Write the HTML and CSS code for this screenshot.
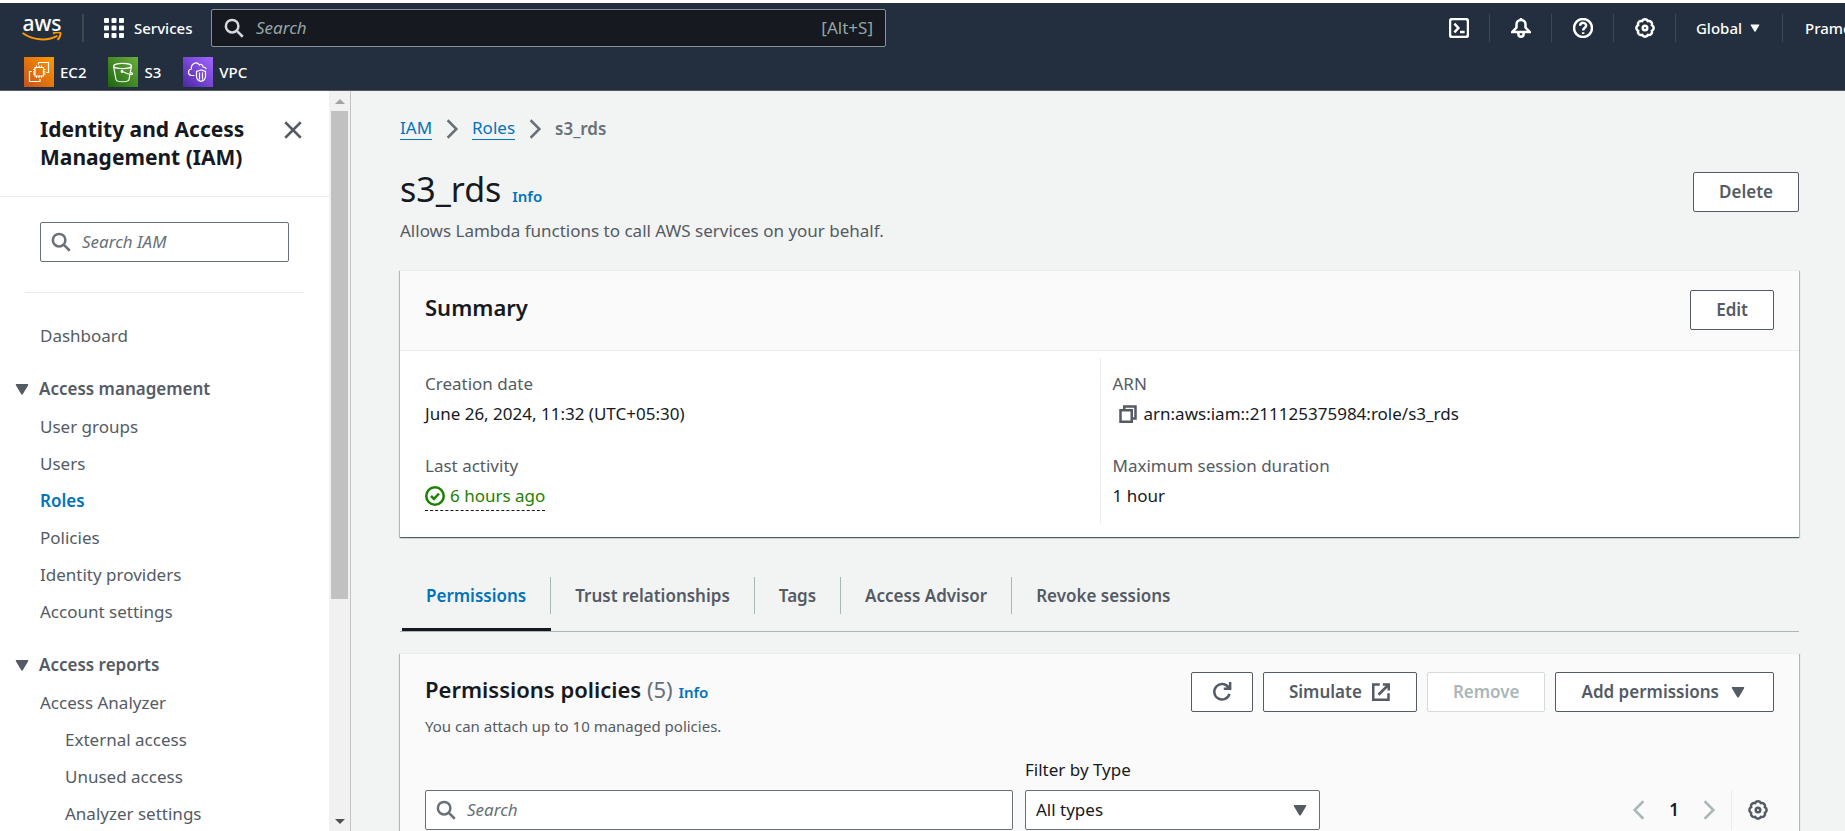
FILE: index.html
```html
<!DOCTYPE html>
<html lang="en">
<head>
<meta charset="utf-8">
<title>s3_rds | IAM | Global</title>
<link rel="stylesheet" href="styles.css">
</head>
<body>
<svg class="defs" aria-hidden="true">
  <defs>
    <linearGradient id="g-ec2" x1="0" y1="1" x2="1" y2="0"><stop offset="0" stop-color="#c8511b"/><stop offset="1" stop-color="#ff9900"/></linearGradient>
    <linearGradient id="g-s3" x1="0" y1="1" x2="1" y2="0"><stop offset="0" stop-color="#1b660f"/><stop offset="1" stop-color="#6cae3e"/></linearGradient>
    <linearGradient id="g-vpc" x1="0" y1="1" x2="1" y2="0"><stop offset="0" stop-color="#4d27a8"/><stop offset="1" stop-color="#a166ff"/></linearGradient>
    <symbol id="i-search" viewBox="0 0 16 16"><circle cx="6.500" cy="6.500" r="5" /><path d="m10.300 10.300 4.700 4.700"/></symbol>
    <symbol id="i-gear" viewBox="0 0 16 16"><path d="M13.54 10.3A2.6 2.6 0 0 1 10.3 13.54A2.6 2.6 0 0 1 5.7 13.54A2.6 2.6 0 0 1 2.46 10.3A2.6 2.6 0 0 1 2.46 5.7A2.6 2.6 0 0 1 5.7 2.46A2.6 2.6 0 0 1 10.3 2.46A2.6 2.6 0 0 1 13.54 5.7A2.6 2.6 0 0 1 13.54 10.3Z"/><circle cx="8" cy="8" r="1.8"/></symbol>
    <symbol id="i-caret" viewBox="0 0 16 16"><path class="solid" d="M3.6 4h8.8c.6 0 .8.5.5.9l-4.3 7.2c-.3.4-.9.4-1.200 0L3.100 4.900c-.3-.4 0-.9.5-.9z"/></symbol>
    <symbol id="i-right" viewBox="0 0 16 16"><path d="m4.500 1 7 7-7 7"/></symbol>
    <symbol id="i-left" viewBox="0 0 16 16"><path d="m11.500 1-7 7 7 7"/></symbol>
  </defs>
</svg>

<header class="topnav">
  <div class="topnav-row">
    <a class="aws" href="#" aria-label="AWS home">
      <span class="aws-word">aws</span>
      <svg class="aws-smile" viewBox="0 0 40 10" aria-hidden="true"><path class="smile-line" d="M.6 1C11 8.500 25.500 9.300 35.300 3.800"/><path class="smile-head" d="M31 1.500c3-1.500 6.800-1.300 7.300-.6.5.8-.3 4.700-2.800 6.900"/></svg>
    </a>
    <span class="bar"></span>
    <button class="services" type="button">
      <svg class="icon" viewBox="0 0 20 20" aria-hidden="true"><path class="solid" d="M0 1a1 1 0 0 1 1-1h3a1 1 0 0 1 1 1v3a1 1 0 0 1-1 1H1a1 1 0 0 1-1-1zM7.500 1a1 1 0 0 1 1-1h3a1 1 0 0 1 1 1v3a1 1 0 0 1-1 1h-3a1 1 0 0 1-1-1zM15 1a1 1 0 0 1 1-1h3a1 1 0 0 1 1 1v3a1 1 0 0 1-1 1h-3a1 1 0 0 1-1-1zM0 8.500a1 1 0 0 1 1-1h3a1 1 0 0 1 1 1v3a1 1 0 0 1-1 1H1a1 1 0 0 1-1-1zM7.500 8.500a1 1 0 0 1 1-1h3a1 1 0 0 1 1 1v3a1 1 0 0 1-1 1h-3a1 1 0 0 1-1-1zM15 8.500a1 1 0 0 1 1-1h3a1 1 0 0 1 1 1v3a1 1 0 0 1-1 1h-3a1 1 0 0 1-1-1zM0 16a1 1 0 0 1 1-1h3a1 1 0 0 1 1 1v3a1 1 0 0 1-1 1H1a1 1 0 0 1-1-1zM7.500 16a1 1 0 0 1 1-1h3a1 1 0 0 1 1 1v3a1 1 0 0 1-1 1h-3a1 1 0 0 1-1-1zM15 16a1 1 0 0 1 1-1h3a1 1 0 0 1 1 1v3a1 1 0 0 1-1 1h-3a1 1 0 0 1-1-1z"/></svg>
      Services
    </button>
    <label class="nav-search">
      <svg class="icon" aria-hidden="true"><use href="#i-search"/></svg>
      <input type="search" placeholder="Search" aria-label="Search AWS">
      <span>[Alt+S]</span>
    </label>
    <div class="utils">
      <button type="button" aria-label="CloudShell"><svg class="icon" viewBox="0 0 16 16"><rect x=".8" y=".8" width="14.400" height="14.400" rx="2"/><path d="m4.300 4.500 3.200 3.500-3.200 3.500M8.800 11.200H12.500"/></svg></button>
      <button type="button" aria-label="Notifications"><svg class="icon" viewBox="0 0 16 16"><path d="M1 11.200h14L11.600 7.600V5.200C11.600 3 10 1.600 8 1.600S4.400 3 4.400 5.200v2.400z"/><path d="M5.900 11.500v1.300a2.100 2.100 0 0 0 4.200 0v-1.300M8 0v2"/></svg></button>
      <button type="button" aria-label="Help"><svg class="icon" viewBox="0 0 16 16"><circle cx="8" cy="8" r="7.200"/><path d="M5.700 6.200C5.700 3 10.600 3.300 10.500 6.100 10.400 7.900 8.100 7.700 8.100 10M8.100 11.300v1.500"/></svg></button>
      <button type="button" aria-label="Settings"><svg class="icon"><use href="#i-gear"/></svg></button>
      <button class="region" type="button">Global <svg class="caret" aria-hidden="true"><use href="#i-caret"/></svg></button>
      <button class="account" type="button">Pramod</button>
    </div>
  </div>
  <nav class="favorites" aria-label="Favorites">
    <a href="#"><svg viewBox="0 0 30 30" aria-hidden="true"><rect width="30" height="30" fill="url(#g-ec2)" stroke="none"/><path d="M11 10.500h8.500v8.500h-8.500zM12.500 10V8.500M15 10V8.500M17.500 10V8.500M12.500 21V19.500M15 21V19.500M17.500 21V19.500M10.500 12.500H9M10.500 14.800H9M10.500 17H9M21.500 12.500h-1.500M21.500 14.800h-1.500M21.500 17h-1.500M14.500 7.500V5.500H24.500V15.500H22.500M8 14.500H5.500V24.500H16V22"/></svg>EC2</a>
    <a href="#"><svg viewBox="0 0 30 30" aria-hidden="true"><rect width="30" height="30" fill="url(#g-s3)" stroke="none"/><ellipse cx="14.500" cy="9" rx="9" ry="2.700"/><path d="M5.500 9 8 22.500c.5 3 12.500 3 13 0L23.500 9M14.500 14.500c4 2 8.500 3.500 10 2.700.5-.8-1-1.700-2.500-2.200"/><circle cx="14" cy="14.500" r=".8"/></svg>S3</a>
    <a href="#"><svg viewBox="0 0 30 30" aria-hidden="true"><rect width="30" height="30" fill="url(#g-vpc)" stroke="none"/><path d="M11.500 18.500H8.500C4.500 18 4.500 12.500 8.500 12 7.500 7 13.500 3.500 16.500 8c.8-1.500 3.500-.5 3.500 2 2 .2 3 1 3.200 2.200M18 13l-4.500 1.500v4.500c0 3 2 4.800 4.500 5.300 2.500-.5 4.500-2.300 4.500-5.300v-4.500zM16.500 15.500v7M19.500 15.500v7"/></svg>VPC</a>
  </nav>
</header>

<div class="shell">
  <aside class="side">
    <div class="side-body">
      <div class="side-head">
        <h2>Identity and Access Management (IAM)</h2>
        <button type="button" aria-label="Close navigation"><svg class="icon" viewBox="0 0 16 16"><path d="m1.800 1.800 12.400 12.400M14.200 1.800 1.800 14.200"/></svg></button>
      </div>
      <label class="field side-search">
        <svg class="icon" aria-hidden="true"><use href="#i-search"/></svg>
        <input type="search" placeholder="Search IAM" aria-label="Search IAM">
      </label>
      <hr>
      <nav aria-label="IAM">
        <ul class="links"><li><a href="#">Dashboard</a></li></ul>
        <button class="group" type="button"><svg class="icon" aria-hidden="true"><use href="#i-caret"/></svg>Access management</button>
        <ul class="links">
          <li><a href="#">User groups</a></li>
          <li><a href="#">Users</a></li>
          <li><a class="current" href="#" aria-current="page">Roles</a></li>
          <li><a href="#">Policies</a></li>
          <li><a href="#">Identity providers</a></li>
          <li><a href="#">Account settings</a></li>
        </ul>
        <button class="group" type="button"><svg class="icon" aria-hidden="true"><use href="#i-caret"/></svg>Access reports</button>
        <ul class="links">
          <li><a href="#">Access Analyzer</a>
            <ul class="links nested">
              <li><a href="#">External access</a></li>
              <li><a href="#">Unused access</a></li>
              <li><a href="#">Analyzer settings</a></li>
            </ul>
          </li>
        </ul>
      </nav>
    </div>
    <div class="scroll" aria-hidden="true">
      <span class="arrow up"></span>
      <span class="thumb"></span>
      <span class="arrow down"></span>
    </div>
  </aside>

  <main>
    <nav class="crumbs" aria-label="Breadcrumbs">
      <a href="#">IAM</a>
      <svg class="icon" aria-hidden="true"><use href="#i-right"/></svg>
      <a href="#">Roles</a>
      <svg class="icon" aria-hidden="true"><use href="#i-right"/></svg>
      <b>s3_rds</b>
    </nav>
    <div class="page-head">
      <div>
        <h1>s3_rds <a class="info" href="#">Info</a></h1>
        <p>Allows Lambda functions to call AWS services on your behalf.</p>
      </div>
      <button class="btn" type="button">Delete</button>
    </div>

    <section class="card">
      <div class="card-head">
        <h2>Summary</h2>
        <button class="btn" type="button">Edit</button>
      </div>
      <div class="summary">
        <dl>
          <dt>Creation date</dt>
          <dd>June 26, 2024, 11:32 (UTC+05:30)</dd>
          <dt>Last activity</dt>
          <dd><span class="activity"><svg class="icon" viewBox="0 0 16 16" aria-hidden="true"><circle cx="8" cy="8" r="7"/><path d="m4.800 8 2.400 2.300L11.200 6"/></svg>6 hours ago</span></dd>
        </dl>
        <dl>
          <dt>ARN</dt>
          <dd><button class="copy" type="button" aria-label="Copy ARN"><svg class="icon" viewBox="0 0 16 16"><path d="M2 5h9v9.200H2zM5 4.500V2h9v9.500h-2.500"/></svg></button>arn:aws:iam::211125375984:role/s3_rds</dd>
          <dt>Maximum session duration</dt>
          <dd>1 hour</dd>
        </dl>
      </div>
    </section>

    <div class="tabs" role="tablist">
      <button type="button" role="tab" aria-selected="true"><span>Permissions</span></button>
      <button type="button" role="tab"><span>Trust relationships</span></button>
      <button type="button" role="tab"><span>Tags</span></button>
      <button type="button" role="tab"><span>Access Advisor</span></button>
      <button type="button" role="tab"><span>Revoke sessions</span></button>
    </div>

    <section class="card policies">
      <div class="policies-head">
        <div>
          <h2>Permissions policies <span class="count">(5)</span> <a class="info" href="#">Info</a></h2>
          <p>You can attach up to 10 managed policies.</p>
        </div>
        <div class="actions">
          <button class="btn" type="button" aria-label="Refresh"><svg class="icon" viewBox="0 0 16 16"><path d="M14 9.500A6.200 6.200 0 1 1 13.300 4.500M14.500 0v5.300H9.400"/></svg></button>
          <button class="btn" type="button">Simulate <svg class="icon" viewBox="0 0 16 16" aria-hidden="true"><path d="M7 2H1.800v12.200H14V9M9.500 2h4.700v4.700M14 2.200 6 10.200"/></svg></button>
          <button class="btn" type="button" disabled>Remove</button>
          <button class="btn" type="button">Add permissions <svg class="icon" aria-hidden="true"><use href="#i-caret"/></svg></button>
        </div>
      </div>
      <div class="filters">
        <label class="field policy-search">
          <svg class="icon" aria-hidden="true"><use href="#i-search"/></svg>
          <input type="search" placeholder="Search" aria-label="Search policies">
        </label>
        <div class="type-filter">
          <label for="type">Filter by Type</label>
          <div class="select">
            <select id="type"><option>All types</option></select>
            <svg class="icon" aria-hidden="true"><use href="#i-caret"/></svg>
          </div>
        </div>
        <div class="pager">
          <button type="button" aria-label="Previous page" disabled><svg class="icon"><use href="#i-left"/></svg></button>
          <button class="page" type="button">1</button>
          <button type="button" aria-label="Next page" disabled><svg class="icon"><use href="#i-right"/></svg></button>
          <button class="prefs" type="button" aria-label="Preferences"><svg class="icon"><use href="#i-gear"/></svg></button>
        </div>
      </div>
    </section>
  </main>
</div>
</body>
</html>
```

FILE: styles.css
```css
* { box-sizing: border-box; }

body {
  margin: 0;
  height: 100vh;
  overflow: hidden;
  display: flex;
  flex-direction: column;
  border-top: 3px solid #fff;
  background: #f2f3f3;
  color: #16191f;
  font: 17px/22px "Noto Sans", "Open Sans", sans-serif;
}

h1, h2, p, ul, dl, dd { margin: 0; padding: 0; }
ul { list-style: none; }
a { color: #0073bb; text-decoration: none; }
button, input, select { font: inherit; color: inherit; }
button { padding: 0; border: 0; background: none; white-space: nowrap; }
input { min-width: 0; flex: 1; border: 0; outline: 0; padding: 0; background: none; }
input::placeholder { color: #687078; font-style: italic; opacity: 1; }

.defs { position: absolute; width: 0; height: 0; }
.icon { width: 20px; height: 20px; flex: none; display: block; fill: none; stroke: currentColor; stroke-width: 2; }
.solid { fill: currentColor; stroke: none; }

/* Top navigation */
.topnav { flex: none; background: #232f3e; color: #fff; border-bottom: 1px solid #545b64; font-size: 15px; font-weight: 500; }
.topnav-row { display: flex; align-items: center; height: 50px; padding: 6px 0 6px 22px; overflow: hidden; }
.aws { display: flex; flex-direction: column; width: 40px; color: #fff; }
.aws-word { font-size: 21px; line-height: 18px; font-weight: 500; text-align: center; }
.aws-smile { width: 40px; height: 10px; fill: none; stroke: #f90; }
.smile-line { stroke-width: 2; }
.smile-head { stroke-width: 2; }
.bar { width: 2px; height: 28px; margin: 0 20px; background: #414750; }
.services { display: flex; align-items: center; gap: 10px; width: 107px; font-weight: 500; }
.nav-search { display: flex; align-items: center; gap: 12px; flex: 0 1 675px; height: 38px; padding: 0 12px; border: 1px solid #879596; border-radius: 2px; background: #16191f; font-size: 17px; font-weight: 400; color: #95a5a6; }
.nav-search .icon { color: #d5dbdb; }
.nav-search input::placeholder { color: #95a5a6; }
.utils { display: flex; align-items: center; margin-left: auto; width: 417px; flex: none; }
.utils button { height: 28px; flex: none; width: 62px; display: flex; align-items: center; justify-content: center; border-right: 1px solid #414750; font-weight: 500; }
.utils .icon { stroke-width: 2px; }
.utils .region { width: 107px; gap: 6px; }
.utils .account { width: auto; padding-left: 22px; border: 0; }
.caret { width: 14px; height: 14px; }
.favorites { display: flex; gap: 22px; height: 37px; padding: 4px 24px 3px; }
.favorites a { display: flex; align-items: center; gap: 6px; color: #fff; }
.favorites svg { width: 30px; height: 30px; fill: none; stroke: #fff; stroke-width: 1.200; }

/* Side navigation */
.shell { flex: 1; min-height: 0; display: flex; }
.side { flex: none; display: flex; width: 351px; border-right: 1px solid #c0c5c5; background: #fff; color: #545b64; overflow: hidden; }
.side-body { flex: 1; min-width: 0; }
.side-head { display: flex; justify-content: space-between; align-items: flex-start; padding: 24px 26px 25px 40px; border-bottom: 1px solid #eaeded; color: #16191f; }
.side-head h2 { width: 220px; font-size: 21px; line-height: 28px; font-weight: 700; }
.side-head button { padding-top: 5px; color: #545b64; }
.field { display: flex; align-items: center; gap: 11px; height: 40px; padding: 0 10px; border: 1px solid #687078; border-radius: 2px; background: #fff; }
.field .icon { color: #687078; }
.side-search { margin: 25px 40px 30px; }
.side hr { margin: 0 25px; border: 0; border-top: 1px solid #eaeded; }
.side nav { padding-top: 24px; }
.links a { display: block; padding: 8px 0 8px 40px; line-height: 21px; color: #545b64; }
.links .current { color: #0073bb; font-weight: 600; }
.links.nested a { padding-left: 65px; }
.group { display: flex; align-items: center; gap: 7px; margin: 16px 0 0; padding-left: 12px; line-height: 38px; font-weight: 600; }
.scroll { display: flex; flex-direction: column; align-items: center; width: 21px; background: #f1f1f1; }
.arrow { border: 5px solid transparent; }
.up { margin: 4px 0 7px; border-bottom-color: #a3a3a3; border-top-width: 4px; }
.thumb { width: 17px; height: 66%; background: #c1c1c1; }
.down { margin: auto 0 2px; border-top-color: #505050; }

/* Main content */
main { flex: 1; min-width: 0; padding: 26px 46px 0 49px; overflow: hidden; }
.crumbs { display: flex; align-items: center; gap: 10px; }
.crumbs a { border-bottom: 1px solid; }
.crumbs .icon { color: #687078; }
.crumbs b { color: #687078; font-weight: 600; }
.page-head { display: flex; justify-content: space-between; align-items: flex-start; padding: 31px 0 27px; }
.page-head .btn { margin: 1px 0; }
h1 { font-size: 34px; line-height: 36px; font-weight: 400; }
.info { font-size: 15px; font-weight: 600; }
h1 .info { margin-left: 2px; }
.page-head p { margin-top: 5px; color: #545b64; line-height: 24px; }
.btn { display: flex; align-items: center; justify-content: center; gap: 9px; height: 40px; padding: 0 25px; border: 1px solid #545b64; border-radius: 2px; background: #fff; color: #545b64; font-weight: 600; }
.btn:disabled { border-color: #d5dbdb; color: #aab7b8; }
.card { background: #fff; border-top: 1px solid #eaeded; box-shadow: 0 1px 1px 0 rgba(0, 28, 36, .5), 1px 1px 1px 0 rgba(0, 28, 36, .2), -1px 1px 1px 0 rgba(0, 28, 36, .2); }
.card h2 { font-size: 22px; line-height: 28px; font-weight: 600; }
.card-head { display: flex; justify-content: space-between; align-items: flex-start; padding: 19px 25px 20px; background: #fafafa; border-bottom: 1px solid #eaeded; }
.card-head h2 { padding-top: 3px; }
.summary { display: grid; grid-template-columns: 1fr 1fr; padding: 7px 0 13px; }
.summary dl { padding: 14px 25px 13px; }
.summary dl + dl { padding-left: 12px; border-left: 1px solid #eaeded; }
dt { line-height: 24px; color: #545b64; }
dd { display: flex; line-height: 28px; margin-top: 4px; }
dd + dt { margin-top: 26px; }
.activity { display: flex; align-items: center; gap: 5px; color: #1d8102; border-bottom: 1px dashed #16191f; }
.copy { padding: 4px 6px 4px 5px; color: #545b64; }
.tabs { display: flex; margin: 28px 0 21px; padding-left: 2px; border-bottom: 1px solid #aab7b8; }
.tabs button { padding: 12px 0 14px; color: #545b64; font-weight: 600; border-bottom: 3px solid transparent; }
.tabs span { display: block; padding: 0 24px; line-height: 37px; border-right: 1px solid #aab7b8; }
.tabs button:last-child span { border: 0; }
.tabs [aria-selected] { color: #0073bb; border-color: #16191f; }

/* Policies */
.policies { padding: 18px 25px 40px; background: #fafafa; }
.policies-head { display: flex; justify-content: space-between; align-items: flex-start; }
.policies-head h2 { padding-top: 3px; }
.count { color: #687078; font-weight: 400; }
.policies-head p { margin-top: 10px; font-size: 15px; line-height: 20px; color: #545b64; }
.actions { display: flex; gap: 10px; }
.actions .btn:first-child { padding: 0 20px; }
.filters { display: flex; align-items: flex-end; gap: 12px; margin-top: 23px; }
.policy-search { flex: 0 1 588px; }
.type-filter { width: 295px; }
.select { position: relative; margin-top: 9px; }
.select select { display: block; appearance: none; width: 100%; height: 40px; padding: 0 10px; border: 1px solid #687078; border-radius: 2px; background: #fff; }
.select .icon { position: absolute; right: 10px; top: 10px; color: #545b64; pointer-events: none; }
.pager { display: flex; align-items: center; height: 40px; margin-left: auto; color: #545b64; }
.pager button:disabled { color: #aab7b8; }
.pager .page { width: 50px; color: #16191f; font-weight: 600; }
.pager .prefs { height: 40px; margin-left: 12px; padding: 0 6px 0 16px; border-left: 1px solid #eaeded; }
```
